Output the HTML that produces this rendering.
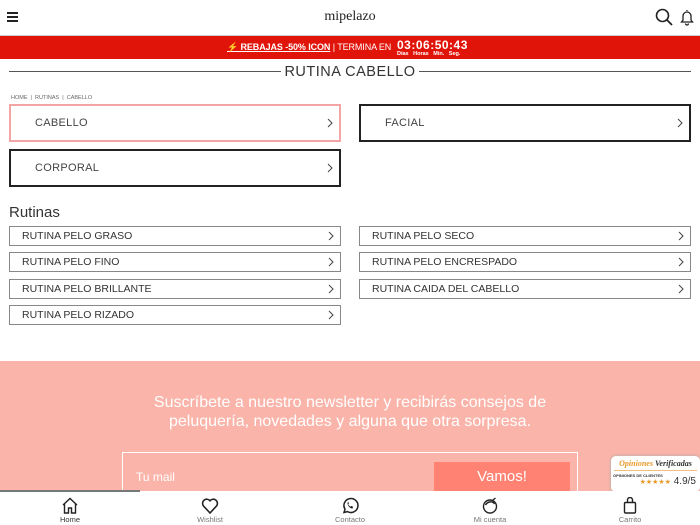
<!DOCTYPE html>
<html><head><meta charset="utf-8"><style>
*{margin:0;padding:0;box-sizing:border-box}
body{width:700px;height:525px;overflow:hidden;font-family:"Liberation Sans",sans-serif;background:#fff;position:relative;color:#333}
.abs{position:absolute}
.card{position:absolute;height:38px;width:332px;border:2px solid #222;font-size:11px;color:#444;padding-left:24px;line-height:34px;letter-spacing:.3px}
.card.pink{border-color:#f3a5a5}
.chev{position:absolute;right:6px;top:50%;margin-top:-5px;width:6px;height:10px}
.r{position:absolute;height:20px;width:332px;border:1px solid #888;font-size:10.5px;color:#333;padding-left:12px;line-height:18px}
.nav{position:absolute;top:491px;width:140px;height:34px;text-align:center;font-size:7.5px;color:#777}
.nav svg{display:block;margin:6px auto 1px}
</style></head><body>
<svg width="0" height="0" style="position:absolute"><defs><symbol id="c" viewBox="0 0 6 10"><path d="M1 1l4 4-4 4" fill="none" stroke="#444" stroke-width="1"/></symbol></defs></svg>
<div class="abs" style="left:7px;top:12px;width:11px;height:2px;background:#222;box-shadow:0 4px 0 #222,0 8px 0 #222"></div>
<div class="abs" style="left:0;width:700px;top:9px;text-align:center;font-family:'Liberation Serif',serif;font-size:14px;color:#222">mipelazo</div>
<svg class="abs" style="left:655px;top:8px" width="18" height="18"><circle cx="7.5" cy="7.5" r="6" fill="none" stroke="#222" stroke-width="1.6"/><path d="M12 12l5 5" stroke="#222" stroke-width="1.8"/></svg>
<svg class="abs" style="left:680px;top:8px" width="14" height="18"><path d="M7 2v1M3 12V8a4 4 0 0 1 8 0v4l1.5 2h-11z M5.5 15.5a1.5 1.5 0 0 0 3 0" fill="none" stroke="#222" stroke-width="1.3"/></svg>
<div class="abs" style="left:0;top:35px;width:700px;height:1px;background:#ccc"></div>
<div class="abs" style="left:0;top:36px;width:700px;height:23px;background:#e1140a;color:#fff">
<div class="abs" style="left:227px;top:6px;font-size:9px;white-space:nowrap;letter-spacing:-.1px"><b style="text-decoration:underline">⚡ REBAJAS -50% ICON</b> | TERMINA EN</div>
<div class="abs" style="left:397px;top:2px;font-size:12px;font-weight:bold;letter-spacing:.5px">03:06:50:43</div>
<div class="abs" style="left:397px;top:15px;font-size:5.5px;font-weight:bold;word-spacing:3px">Días Horas Min. Seg.</div>
</div>
<div class="abs" style="left:9px;top:71px;width:272px;height:1px;background:#555"></div>
<div class="abs" style="left:419px;top:71px;width:272px;height:1px;background:#555"></div>
<div class="abs" style="left:0;width:700px;top:64px;text-align:center;font-size:14.5px;color:#333;letter-spacing:.5px">RUTINA CABELLO</div>
<div class="abs" style="left:11px;top:95px;font-size:5.5px;color:#666">HOME &nbsp;| &nbsp;RUTINAS &nbsp;| &nbsp;CABELLO</div>
<div class="card pink" style="left:9px;top:104px">CABELLO<svg class="chev"><use href="#c"/></svg></div>
<div class="card" style="left:359px;top:104px">FACIAL<svg class="chev"><use href="#c"/></svg></div>
<div class="card" style="left:9px;top:149px">CORPORAL<svg class="chev"><use href="#c"/></svg></div>
<div class="abs" style="left:9px;top:204px;font-size:15px;color:#333">Rutinas</div>
<div class="r" style="left:9px;top:226px">RUTINA PELO GRASO<svg class="chev"><use href="#c"/></svg></div>
<div class="r" style="left:359px;top:226px">RUTINA PELO SECO<svg class="chev"><use href="#c"/></svg></div>
<div class="r" style="left:9px;top:252px">RUTINA PELO FINO<svg class="chev"><use href="#c"/></svg></div>
<div class="r" style="left:359px;top:252px">RUTINA PELO ENCRESPADO<svg class="chev"><use href="#c"/></svg></div>
<div class="r" style="left:9px;top:279px">RUTINA PELO BRILLANTE<svg class="chev"><use href="#c"/></svg></div>
<div class="r" style="left:359px;top:279px">RUTINA CAIDA DEL CABELLO<svg class="chev"><use href="#c"/></svg></div>
<div class="r" style="left:9px;top:305px">RUTINA PELO RIZADO<svg class="chev"><use href="#c"/></svg></div>
<div class="abs" style="left:0;top:361px;width:700px;height:130px;background:#fab4a9">
<div class="abs" style="left:0;width:700px;top:32px;text-align:center;color:#fff;font-size:16px;line-height:19px">Suscríbete a nuestro newsletter y recibirás consejos de<br>peluquería, novedades y alguna que otra sorpresa.</div>
<div class="abs" style="left:122px;top:91px;width:456px;height:45px;border:1px solid #fff"></div>
<div class="abs" style="left:136px;top:109px;color:#fff;font-size:12px">Tu mail</div>
<div class="abs" style="left:434px;top:101px;width:136px;height:30px;background:#ff8272;color:#fff;font-size:15px;text-align:center;line-height:30px">Vamos!</div>
</div>
<div class="abs" style="left:611px;top:456px;width:89px;height:36px;background:#fff;border-radius:5px;box-shadow:0 0 3px #aaa">
<div style="font-family:'Liberation Serif',serif;font-style:italic;font-weight:bold;font-size:8px;color:#e79a2a;text-align:center;margin-top:3px">Opiniones <span style="color:#333">Verificadas</span></div>
<div style="height:1px;background:#f3c07a;margin:2px 3px"></div>
<div style="font-size:4px;font-weight:bold;margin-left:2px">OPINIONES DE CLIENTES</div>
<div style="font-size:10px;text-align:right;margin-right:4px;margin-top:-2px"><span style="color:#e79a2a;font-size:7px">★★★★★</span> 4.9/5</div>
</div>
<div class="abs" style="left:0;top:491px;width:700px;height:34px;background:#fff"></div>
<div class="abs" style="left:0;top:490px;width:140px;height:2px;background:#777"></div>
<div class="nav" style="left:0;color:#333"><svg width="18" height="17"><path d="M2 8L9 1.5 16 8M3.5 7v9h4v-5h3v5h4V7" fill="none" stroke="#222" stroke-width="1.4"/></svg>Home</div>
<div class="nav" style="left:140px"><svg width="18" height="17"><path d="M9 16L2.5 9A3.8 3.8 0 0 1 9 3.8 3.8 3.8 0 0 1 15.5 9z" fill="none" stroke="#222" stroke-width="1.6"/></svg>Wishlist</div>
<div class="nav" style="left:280px"><svg width="18" height="17"><path d="M3 15.5l1-3.3A7 7 0 1 1 6.5 14.6z" fill="none" stroke="#222" stroke-width="1.5"/><path d="M6.5 6c0 3 2.5 5.5 5 5.5l.6-1.6-1.6-1-1 .8c-1-.5-2-1.5-2.3-2.3l.8-1-1-1.6z" fill="#222"/></svg>Contacto</div>
<div class="nav" style="left:420px"><svg width="18" height="17"><circle cx="9" cy="9.5" r="6.5" fill="none" stroke="#222" stroke-width="1.4"/><path d="M4.5 8c2-3.5 7-4.5 9-1M12 3l2.5-2" fill="none" stroke="#222" stroke-width="1.4"/></svg>Mi cuenta</div>
<div class="nav" style="left:560px"><svg width="18" height="17"><rect x="3.5" y="5.5" width="11" height="10.5" rx="1" fill="none" stroke="#222" stroke-width="1.4"/><path d="M6.5 5.5V3a2.5 2.5 0 0 1 5 0v2.5" fill="none" stroke="#222" stroke-width="1.4"/></svg>Carrito</div>
</body></html>
